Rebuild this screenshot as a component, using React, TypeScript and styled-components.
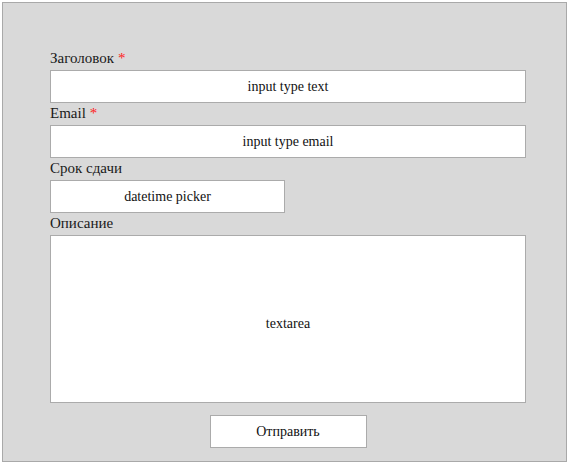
import styled, { createGlobalStyle } from 'styled-components'

const GlobalStyle = createGlobalStyle`
	body {
		margin: 0;
		background: #ffffff;
		font-family: "Liberation Serif", "Times New Roman", Tinos, "DejaVu Serif", serif;
	}
`

const Panel = styled.div`
	margin: 2px;
	width: 565px;
	height: 460px;
	box-sizing: border-box;
	border: 1px solid #a9a9a9;
	background: #d9d9d9;
	padding: 45px 0 0 47px;
	font-family: "Liberation Serif", "Times New Roman", Tinos, "DejaVu Serif", serif;
`

const Form = styled.form`
	width: 476px;
	display: flex;
	flex-direction: column;
`

const Label = styled.label`
	display: block;
	height: 22px;
	line-height: 20px;
	font-family: "Liberation Serif", "Times New Roman", Tinos, "DejaVu Serif", serif;
	font-size: 15px;
	color: #1a1a1a;
`

const Required = styled.span`
	color: #ff1a1a;
	margin-left: 4px;
`

const Field = styled.input<{ $width?: number }>`
	box-sizing: border-box;
	width: ${(p) => (p.$width ? `${p.$width}px` : '100%')};
	height: 33px;
	margin: 0;
	padding: 0 6px;
	border: 1px solid #ababab;
	background: #fff;
	font-family: "Liberation Serif", "Times New Roman", Tinos, "DejaVu Serif", serif;
	font-size: 14px;
	color: #111;
	text-align: center;
	outline: none;
`

const Area = styled.textarea`
	box-sizing: border-box;
	width: 100%;
	height: 168px;
	margin: 0;
	padding: 80px 6px 0;
	border: 1px solid #ababab;
	background: #fff;
	font-family: "Liberation Serif", "Times New Roman", Tinos, "DejaVu Serif", serif;
	font-size: 14px;
	color: #111;
	text-align: center;
	resize: none;
	outline: none;
	overflow: hidden;
`

const Actions = styled.div`
	display: flex;
	justify-content: center;
	margin-top: 12px;
`

const Submit = styled.button`
	box-sizing: border-box;
	width: 157px;
	height: 33px;
	border: 1px solid #ababab;
	background: #fff;
	font-family: "Liberation Serif", "Times New Roman", Tinos, "DejaVu Serif", serif;
	font-size: 14px;
	color: #111;
	cursor: pointer;
`

const App = () => {
	return (
		<>
			<GlobalStyle />
			<Panel>
				<Form onSubmit={(e) => e.preventDefault()}>
					<Label>
						Заголовок<Required>*</Required>
					</Label>
					<Field type='text' defaultValue='input type text' />
					<Label>
						Email<Required>*</Required>
					</Label>
					<Field type='text' defaultValue='input type email' />
					<Label>Срок сдачи</Label>
					<Field type='text' $width={235} defaultValue='datetime picker' />
					<Label>Описание</Label>
					<Area defaultValue='textarea' />
					<Actions>
						<Submit type='submit'>Отправить</Submit>
					</Actions>
				</Form>
			</Panel>
		</>
	)
}

export default App
